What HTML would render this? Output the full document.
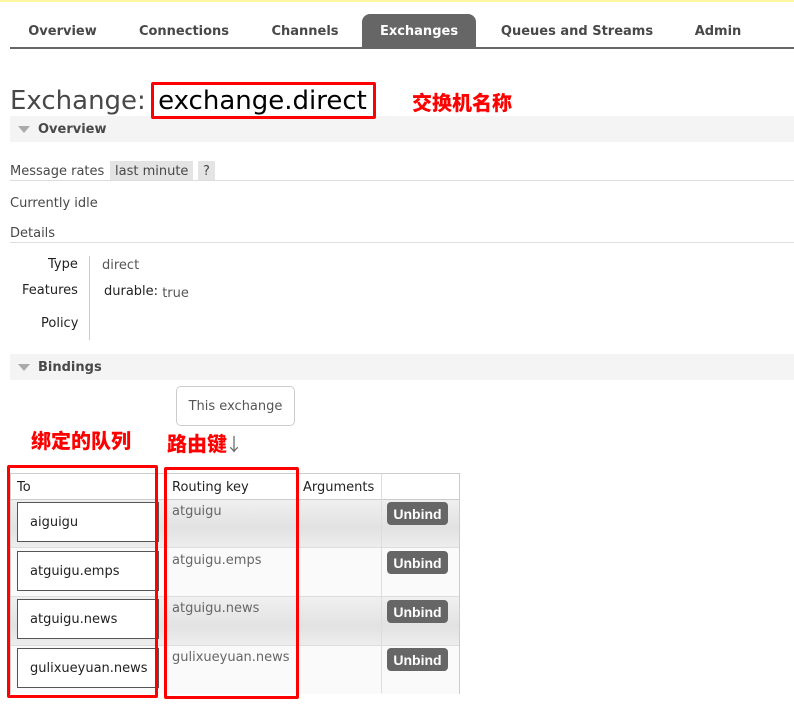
<!DOCTYPE html>
<html><head><meta charset="utf-8"><style>
*{margin:0;padding:0;box-sizing:border-box}
body{width:794px;height:724px;background:#fff;position:relative;overflow:hidden;font-family:"DejaVu Sans",Verdana,sans-serif;font-size:13px;color:#484848}
.a{position:absolute;white-space:nowrap}
.tab{position:absolute;top:14px;height:34px;line-height:36px;font-weight:bold;font-size:13px;color:#484848;text-align:center}
.red{position:absolute;border:3px solid #f00;border-radius:2px;z-index:5}
.cn{position:absolute;color:#f00;font-weight:900;font-size:20px;font-family:"Noto Sans CJK SC",sans-serif;white-space:nowrap}
.bar{position:absolute;left:10px;width:784px;height:26px;background:#f4f4f4;font-weight:bold;line-height:28px;padding-left:28px;font-size:13px}
.bar:before{content:"";position:absolute;left:8px;top:10px;border-left:6px solid transparent;border-right:6px solid transparent;border-top:7px solid #aaa}
.hr{position:absolute;left:10px;width:784px;height:1px;background:#ddd}
.row{position:absolute;left:11px;width:448px;height:49px}
.g{background:linear-gradient(#f0f0f0,#e2e2e2 60%,#eee)}
.w{background:#fafafa}
.box{position:absolute;left:17px;width:142px;height:40px;border:1px solid #555;background:#fff;line-height:40px;padding-left:12px;color:#222}
.rk{position:absolute;left:172px;color:#666}
.btn{position:absolute;left:387px;width:61px;height:23px;background:#666;color:#fff;border-radius:4px;font-weight:bold;text-align:center;line-height:24px;font-size:14px;font-family:"Liberation Sans",sans-serif}
</style></head><body>
<div class="a" style="left:0;top:0;width:794px;height:2px;background:#fff8a0"></div>
<div class="a" style="left:10px;top:47px;width:784px;height:2px;background:#666"></div>
<div class="tab" style="left:14px;width:97px">Overview</div>
<div class="tab" style="left:130px;width:108px">Connections</div>
<div class="tab" style="left:262px;width:86px">Channels</div>
<div class="tab" style="left:362px;width:114px;background:#666;color:#fff;border-radius:8px 8px 0 0">Exchanges</div>
<div class="tab" style="left:492px;width:170px">Queues and Streams</div>
<div class="tab" style="left:684px;width:68px">Admin</div>

<div class="a" style="left:10px;top:83px;font-size:26px;color:#484848;line-height:36px">Exchange: <span style="color:#000;margin-left:4px">exchange.direct</span></div>
<div class="red" style="left:151px;top:82px;width:225px;height:37px"></div>
<div class="cn" style="left:412px;top:87px">交换机名称</div>

<div class="bar" style="top:116px">Overview</div>
<div class="a" style="left:10px;top:164px">Message rates</div>
<div class="a" style="left:110px;top:161px;height:20px;padding:3px 5px;background:#e4e4e4">last minute</div>
<div class="a" style="left:198px;top:161px;height:20px;padding:3px 5px;background:#e4e4e4">?</div>
<div class="hr" style="top:180px"></div>
<div class="a" style="left:10px;top:196px">Currently idle</div>
<div class="a" style="left:10px;top:226px">Details</div>
<div class="hr" style="top:242px"></div>
<div class="a" style="left:48px;top:257px;color:#222">Type</div>
<div class="a" style="left:22px;top:283px;color:#222">Features</div>
<div class="a" style="left:41px;top:316px;color:#222">Policy</div>
<div class="a" style="left:89px;top:256px;width:1px;height:84px;background:#ccc"></div>
<div class="a" style="left:102px;top:258px;color:#555">direct</div>
<div class="a" style="left:104px;top:284px;color:#222">durable: <span style="color:#555;position:relative;top:2px">true</span></div>

<div class="bar" style="top:354px">Bindings</div>
<div class="a" style="left:176px;top:386px;width:119px;height:40px;border:1px solid #ccc;border-radius:5px;line-height:40px;text-align:center;color:#555">This exchange</div>
<div class="cn" style="left:31px;top:425px">绑定的队列</div>
<div class="cn" style="left:167px;top:428px">路由键<span style="color:#666;font-weight:normal;font-size:18px;margin-left:-2px">↓</span></div>

<div class="a" style="left:10px;top:473px;width:450px;height:221px;border:1px solid #ccc"></div>
<div class="a" style="left:17px;top:480px;color:#222">To</div>
<div class="a" style="left:172px;top:480px;color:#222">Routing key</div>
<div class="a" style="left:303px;top:480px;color:#222">Arguments</div>
<div class="row g" style="top:499px"></div>
<div class="row w" style="top:548px"></div>
<div class="row g" style="top:597px"></div>
<div class="row w" style="top:645px"></div>
<div class="a" style="left:11px;top:499px;width:448px;height:1px;background:#ccc"></div>
<div class="a" style="left:11px;top:547px;width:448px;height:1px;background:#ddd"></div>
<div class="a" style="left:11px;top:596px;width:448px;height:1px;background:#ddd"></div>
<div class="a" style="left:11px;top:645px;width:448px;height:1px;background:#ddd"></div>
<div class="a" style="left:298px;top:474px;width:1px;height:219px;background:#ddd"></div>
<div class="a" style="left:381px;top:474px;width:1px;height:219px;background:#ddd"></div>
<div class="a" style="left:165px;top:474px;width:1px;height:219px;background:#ddd"></div>
<div class="box" style="top:502px">aiguigu</div>
<div class="box" style="top:551px">atguigu.emps</div>
<div class="box" style="top:599px">atguigu.news</div>
<div class="box" style="top:648px">gulixueyuan.news</div>
<div class="rk" style="top:504px">atguigu</div>
<div class="rk" style="top:553px">atguigu.emps</div>
<div class="rk" style="top:601px">atguigu.news</div>
<div class="rk" style="top:650px">gulixueyuan.news</div>
<div class="btn" style="top:502px">Unbind</div>
<div class="btn" style="top:551px">Unbind</div>
<div class="btn" style="top:600px">Unbind</div>
<div class="btn" style="top:648px">Unbind</div>
<div class="red" style="left:7px;top:465px;width:151px;height:233px"></div>
<div class="red" style="left:164px;top:467px;width:135px;height:232px"></div>
</body></html>
